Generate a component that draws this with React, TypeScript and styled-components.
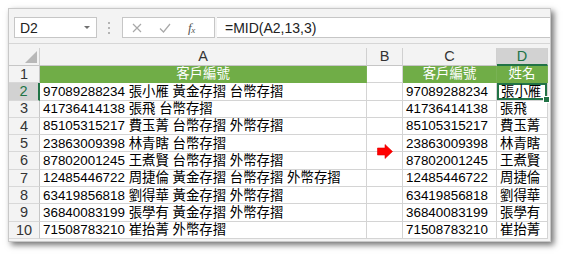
import React from "react";
import styled, { createGlobalStyle } from "styled-components";

const Global = createGlobalStyle`
  html, body { margin: 0; padding: 0; background: #ffffff; }
  body { font-family: "Liberation Sans", "Noto Sans CJK TC", sans-serif; }
  * { box-sizing: border-box; }
`;

const Stage = styled.div`
  width: 567px;
  height: 257px;
  padding: 8px 0 0 8px;
`;

const Window = styled.div`
  width: 543px;
  height: 234px;
  background: #f3f3f3;
  border: 1px solid #c8c8c8;
  box-shadow: 3px 3px 6px rgba(0, 0, 0, 0.55);
  overflow: hidden;
  display: flex;
  flex-direction: column;
`;

const Toolbar = styled.div`
  height: 35px;
  flex: none;
  display: flex;
  align-items: flex-start;
  padding: 8px 0 0 5px;
  border-bottom: 1px solid #d6d6d6;
`;

const NameBox = styled.div`
  width: 83px;
  height: 21px;
  background: #fff;
  border: 1px solid #c6c6c6;
  display: flex;
  align-items: center;
  justify-content: space-between;
  padding: 0 6px 0 5px;
  font-size: 14px;
  color: #222;
`;

const Caret = styled.span`
  width: 0;
  height: 0;
  border-left: 3px solid transparent;
  border-right: 3px solid transparent;
  border-top: 3px solid #707070;
`;

const Dots = styled.div`
  width: 26px;
  height: 21px;
  display: flex;
  flex-direction: column;
  align-items: center;
  justify-content: center;
  gap: 3px;
  margin-left: -1px;
  span {
    width: 2px;
    height: 2px;
    background: #b4b4b4;
  }
`;

const FormulaGroup = styled.div`
  flex: 1;
  height: 21px;
  display: flex;
`;

const Buttons = styled.div`
  width: 93px;
  height: 21px;
  background: #fff;
  border: 1px solid #c6c6c6;
  display: flex;
  align-items: center;
  padding-left: 9px;
  gap: 17px;
`;

const Fx = styled.span`
  font-family: "Liberation Serif", serif;
  font-style: italic;
  font-size: 13px;
  color: #555;
  letter-spacing: -0.5px;
  sub {
    font-size: 9px;
    vertical-align: -1px;
  }
`;

const FormulaInput = styled.div`
  flex: 1;
  height: 21px;
  background: #fff;
  border: 1px solid #c6c6c6;
  border-left: none;
  border-right: none;
  margin-left: 2px;
  padding-left: 8px;
  display: flex;
  align-items: center;
  font-size: 14px;
  color: #222;
`;

const Grid = styled.div`
  margin-top: 4px;
  display: grid;
  grid-template-columns: 31px 327px 36px 94px 51px;
  grid-template-rows: 18px repeat(10, 17.3px);
  font-size: 13.4px;
  color: #000;
`;

const Corner = styled.div`
  background: #f3f3f3;
  border-right: 1px solid #d0d0d0;
  border-bottom: 1px solid #c6c6c6;
  display: flex;
  align-items: flex-end;
  justify-content: flex-end;
  padding: 0 2px 2px 0;
`;

const ColHead = styled.div<{ $sel?: boolean }>`
  background: ${(p) => (p.$sel ? "#d2d2d2" : "#f3f3f3")};
  border-right: 1px solid #d0d0d0;
  border-bottom: ${(p) => (p.$sel ? "2px solid #217346" : "1px solid #c6c6c6")};
  color: ${(p) => (p.$sel ? "#217346" : "#333")};
  font-size: 14.5px;
  display: flex;
  align-items: center;
  justify-content: center;
  line-height: 1;
`;

const RowHead = styled.div<{ $sel?: boolean }>`
  background: ${(p) => (p.$sel ? "#d2d2d2" : "#f3f3f3")};
  border-right: ${(p) => (p.$sel ? "2px solid #217346" : "1px solid #c6c6c6")};
  border-bottom: 1px solid #d8d8d8;
  color: ${(p) => (p.$sel ? "#217346" : "#333")};
  font-size: 14.5px;
  display: flex;
  align-items: center;
  justify-content: center;
  line-height: 1;
`;

const Cell = styled.div<{ $fill?: boolean; $center?: boolean; $sel?: boolean }>`
  position: relative;
  background: ${(p) => (p.$fill ? "#70ad47" : "#ffffff")};
  color: ${(p) => (p.$fill ? "#ffffff" : "#000")};
  border-right: 1px solid ${(p) => (p.$fill ? "#79b254" : "#d4d4d4")};
  border-bottom: 1px solid ${(p) => (p.$fill ? "#70ad47" : "#d4d4d4")};
  display: flex;
  align-items: center;
  justify-content: ${(p) => (p.$center ? "center" : "flex-start")};
  padding: 0 3px;
  white-space: nowrap;
  overflow: visible;
  line-height: 1;
  ${(p) =>
    p.$sel
      ? `
    box-shadow: inset 0 0 0 2px #217346;
    padding-left: 4px;
    z-index: 2;
    &::after {
      content: "";
      position: absolute;
      right: -3px;
      bottom: -3px;
      width: 5px;
      height: 5px;
      background: #217346;
      border: 1px solid #fff;
    }
  `
      : ""}
`;

const ArrowMark = styled.svg`
  position: absolute;
  left: 10px;
  bottom: -8px;
  z-index: 3;
`;

type Row = { id: string; name: string; items: string };

const rows: Row[] = [
  { id: "97089288234", name: "張小雁", items: "黃金存摺 台幣存摺" },
  { id: "41736414138", name: "張飛", items: "台幣存摺" },
  { id: "85105315217", name: "費玉菁", items: "台幣存摺 外幣存摺" },
  { id: "23863009398", name: "林青瞎", items: "台幣存摺" },
  { id: "87802001245", name: "王煮賢", items: "台幣存摺 外幣存摺" },
  { id: "12485446722", name: "周捷倫", items: "黃金存摺 台幣存摺 外幣存摺" },
  { id: "63419856818", name: "劉得華", items: "黃金存摺 外幣存摺" },
  { id: "36840083199", name: "張學有", items: "黃金存摺 外幣存摺" },
  { id: "71508783210", name: "崔抬菁", items: "外幣存摺" },
];

export default function App() {
  return (
    <>
      <Global />
      <Stage>
        <Window>
          <Toolbar>
            <NameBox>
              <span>D2</span>
              <Caret />
            </NameBox>
            <Dots>
              <span />
              <span />
              <span />
            </Dots>
            <FormulaGroup>
              <Buttons>
                <svg width="10" height="10" viewBox="0 0 10 10">
                  <path d="M1 1 L9 9 M9 1 L1 9" stroke="#a8a8a8" strokeWidth="1.2" fill="none" />
                </svg>
                <svg width="12" height="10" viewBox="0 0 12 10">
                  <path d="M1 5.5 L4.5 9 L11 1" stroke="#a8a8a8" strokeWidth="1.2" fill="none" />
                </svg>
                <Fx>
                  f<sub>x</sub>
                </Fx>
              </Buttons>
              <FormulaInput>=MID(A2,13,3)</FormulaInput>
            </FormulaGroup>
          </Toolbar>
          <Grid>
            <Corner>
              <svg width="12" height="12" viewBox="0 0 12 12">
                <polygon points="12,0 12,12 0,12" fill="#b8b8b8" />
              </svg>
            </Corner>
            <ColHead>A</ColHead>
            <ColHead>B</ColHead>
            <ColHead>C</ColHead>
            <ColHead $sel>D</ColHead>

            <RowHead>1</RowHead>
            <Cell $fill $center>客戶編號</Cell>
            <Cell />
            <Cell $fill $center>客戶編號</Cell>
            <Cell $fill $center>姓名</Cell>

            {rows.map((r, i) => (
              <React.Fragment key={r.id}>
                <RowHead $sel={i === 0}>{i + 2}</RowHead>
                <Cell>{`${r.id} ${r.name} ${r.items}`}</Cell>
                <Cell>
                  {i === 3 && (
                    <ArrowMark width="16" height="15" viewBox="0 0 16 15">
                      <path d="M0.5 4 H8 V0.5 L15.5 7.5 L8 14.5 V11 H0.5 Z" fill="#ff0000" stroke="#e00000" strokeWidth="0.6" />
                    </ArrowMark>
                  )}
                </Cell>
                <Cell>{r.id}</Cell>
                <Cell $sel={i === 0}>{r.name}</Cell>
              </React.Fragment>
            ))}
          </Grid>
        </Window>
      </Stage>
    </>
  );
}
